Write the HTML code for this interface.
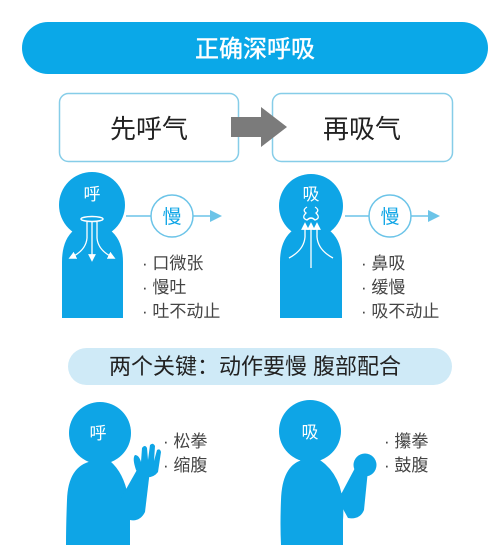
<!DOCTYPE html>
<html><head><meta charset="utf-8"><style>
html,body{margin:0;padding:0;background:#fff;}
svg{display:block;}
text{font-family:"Liberation Sans","Noto Sans CJK SC",sans-serif;}
</style></head><body>
<svg width="500" height="555" viewBox="0 0 500 555" xmlns="http://www.w3.org/2000/svg">
<defs>
<marker id="ah" markerWidth="6" markerHeight="6" refX="3" refY="3" orient="auto"><path d="M0,0 L6,3 L0,6 Z" fill="#fff"/></marker>
</defs>
<rect x="22" y="22" width="466" height="52" rx="26" fill="#0aa8e8"/>
<text x="255" y="57" font-size="24" fill="#fff" text-anchor="middle" stroke="#fff" stroke-width="0.4">正确深呼吸</text>

<rect x="59.5" y="93.5" width="179" height="68" rx="9" fill="#fff" stroke="#86cde8" stroke-width="1.5"/>
<rect x="272.5" y="93.5" width="180" height="68" rx="9" fill="#fff" stroke="#86cde8" stroke-width="1.5"/>
<text x="149" y="138" font-size="26" fill="#222" text-anchor="middle">先呼气</text>
<text x="362" y="138" font-size="26" fill="#222" text-anchor="middle">再吸气</text>
<path d="M231,117 H261 V107 L287,127 L261,147 V137 H231 Z" fill="#7b7b7b"/>

<g fill="#0ea5e6">
<circle cx="92" cy="205" r="33"/>
<path d="M74,230 Q62,240 62,262 V318 H123 V262 Q123,240 110,230 Z"/>
</g>
<text x="92" y="200" font-size="17" fill="#fff" text-anchor="middle">呼</text>
<ellipse cx="92" cy="219" rx="11" ry="2.5" fill="none" stroke="#fff" stroke-width="1.5"/>
<g fill="none" stroke="#fff" stroke-width="1.3">
<path d="M87,222 V238 Q86,250 72,257" marker-end="url(#ah)"/>
<path d="M92,222 V258" marker-end="url(#ah)"/>
<path d="M97,222 V238 Q98,250 112,257" marker-end="url(#ah)"/>
</g>
<line x1="126" y1="216" x2="151" y2="216" stroke="#6cc4e8" stroke-width="1.5"/>
<circle cx="172" cy="216" r="21" fill="#fff" stroke="#6cc4e8" stroke-width="1.5"/>
<text x="172" y="223" font-size="19" fill="#0ea5e6" text-anchor="middle">慢</text>
<line x1="193" y1="216" x2="212" y2="216" stroke="#6cc4e8" stroke-width="1.5"/>
<path d="M210,210 L222,216 L210,222 Z" fill="#6cc4e8"/>
<g font-size="17" fill="#444">
<text x="142" y="269">· 口微张</text>
<text x="142" y="293">· 慢吐</text>
<text x="142" y="317">· 吐不动止</text>
</g>

<g fill="#0ea5e6">
<circle cx="311" cy="206" r="32"/>
<path d="M293,230 Q280,240 280,262 V318 H342 V262 Q342,240 329,230 Z"/>
</g>
<text x="311" y="200" font-size="17" fill="#fff" text-anchor="middle">吸</text>
<path d="M307,207 Q302,210 306,213 Q301,218 307,220 Q311,216 315,220 Q321,218 316,213 Q320,210 315,207" fill="none" stroke="#fff" stroke-width="1.3"/>
<g fill="none" stroke="#fff" stroke-width="1.3">
<path d="M289,258 Q304,250 305,237 V226" marker-end="url(#ah)"/>
<path d="M311,268 V226" marker-end="url(#ah)"/>
<path d="M333,258 Q318,250 317,237 V226" marker-end="url(#ah)"/>
</g>
<line x1="345" y1="216" x2="369" y2="216" stroke="#6cc4e8" stroke-width="1.5"/>
<circle cx="390" cy="216" r="21" fill="#fff" stroke="#6cc4e8" stroke-width="1.5"/>
<text x="390" y="223" font-size="19" fill="#0ea5e6" text-anchor="middle">慢</text>
<line x1="411" y1="216" x2="430" y2="216" stroke="#6cc4e8" stroke-width="1.5"/>
<path d="M428,210 L440,216 L428,222 Z" fill="#6cc4e8"/>
<g font-size="17" fill="#444">
<text x="361" y="269">· 鼻吸</text>
<text x="361" y="293">· 缓慢</text>
<text x="361" y="317">· 吸不动止</text>
</g>

<rect x="68" y="348" width="384" height="37" rx="18.5" fill="#cfeaf7"/>
<text x="255" y="374" font-size="22" fill="#222" text-anchor="middle">两个关键：动作要慢 腹部配合</text>

<g fill="#0ea5e6">
<circle cx="100" cy="433" r="31"/>
<path d="M92,461 Q68,466 67,500 Q66,525 66,545 H130 V520 Q130,478 110,461 Z"/>
<path d="M120,500 L138,468 L150,470 L145,512 Q140,522 130,520 Z"/>
<path d="M136,470 Q132,458 135,455 Q139,455 141,462 L142,448 Q145,444 147,448 L148,460 L150,445 Q153,442 155,446 L154,461 L157,450 Q160,448 161,452 L158,472 Q152,480 140,476 Z"/>
</g>
<text x="98" y="439" font-size="17" fill="#fff" text-anchor="middle">呼</text>
<g font-size="17" fill="#444">
<text x="163" y="447">· 松拳</text>
<text x="163" y="471">· 缩腹</text>
</g>

<g fill="#0ea5e6">
<circle cx="310" cy="431" r="31"/>
<path d="M302,460 Q282,466 281,500 Q280,525 281,545 H343 V520 Q346,478 320,460 Z"/>
<path d="M338,500 L355,468 L368,470 L364,510 Q360,520 348,518 Z"/>
<circle cx="365" cy="465" r="11.5"/>
</g>
<text x="310" y="438" font-size="17" fill="#fff" text-anchor="middle">吸</text>
<g font-size="17" fill="#444">
<text x="384" y="447">· 攥拳</text>
<text x="384" y="471">· 鼓腹</text>
</g>
</svg>
</body></html>
